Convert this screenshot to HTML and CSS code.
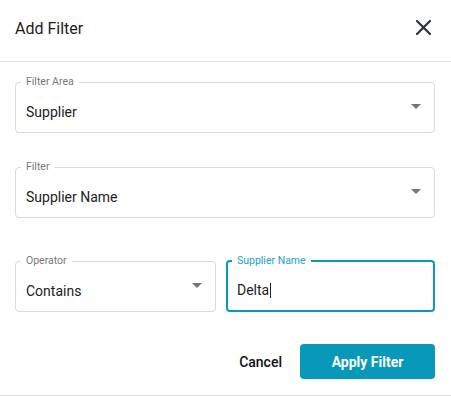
FILE: index.html
```html
<!DOCTYPE html>
<html lang="en">
<head>
<meta charset="utf-8">
<title>Add Filter</title>
<link rel="stylesheet" href="styles.css">
</head>
<body>
<div class="dialog">
  <div class="header">
    <h2 class="title">Add Filter</h2>
    <button class="close" aria-label="Close">
      <svg width="15" height="15" viewBox="0 0 15 15"><path d="M1 1L14 14M14 1L1 14" stroke="#2e3338" stroke-width="2.2" fill="none" stroke-linecap="square"/></svg>
    </button>
  </div>
  <div class="body">
    <fieldset class="field field-1">
      <legend>Filter Area</legend>
      <div class="control"><span class="value">Supplier</span><svg class="arrow" width="10" height="5" viewBox="0 0 10 5"><path d="M0 0L5 5L10 0Z" fill="#757575"/></svg></div>
    </fieldset>
    <fieldset class="field field-2">
      <legend>Filter</legend>
      <div class="control"><span class="value">Supplier Name</span><svg class="arrow" width="10" height="5" viewBox="0 0 10 5"><path d="M0 0L5 5L10 0Z" fill="#757575"/></svg></div>
    </fieldset>
    <div class="row">
      <fieldset class="field operator">
        <legend>Operator</legend>
        <div class="control"><span class="value">Contains</span><svg class="arrow" width="10" height="5" viewBox="0 0 10 5"><path d="M0 0L5 5L10 0Z" fill="#757575"/></svg></div>
      </fieldset>
      <fieldset class="field focused">
        <legend>Supplier Name</legend>
        <div class="control"><span class="value">Delta</span><span class="caret"></span></div>
      </fieldset>
    </div>
    <div class="actions">
      <button class="btn-cancel">Cancel</button>
      <button class="btn-apply">Apply Filter</button>
    </div>
  </div>
</div>
</body>
</html>
```
FILE: styles.css
```css
* { box-sizing: border-box; }
html, body { margin: 0; padding: 0; background: #fff; }
body { font-family: Roboto, "Noto Sans", Arial, sans-serif; color: #222; }

.dialog {
  width: 451px;
  height: 396px;
  border-bottom: 1px solid #e2e2ea;
  display: flex;
  flex-direction: column;
}

.header {
  height: 62px;
  padding: 19px 20px 0 15px;
  display: flex;
  justify-content: space-between;
  align-items: flex-start;
  border-bottom: 1px solid #e3e3e3;
}
.title {
  margin: 0;
  font-size: 16px;
  line-height: 19px;
  font-weight: 400;
  color: #1d1d1d;
}
.close {
  margin: 1px 0 0 0;
  padding: 0;
  border: 0;
  background: none;
  width: 15px;
  height: 15px;
  display: flex;
}

.body {
  padding: 14px 16px 0 15px;
  display: flex;
  flex-direction: column;
}

.field {
  margin: 0;
  min-width: 0;
  border: 1px solid #dadada;
  border-radius: 4px;
  padding: 16px 13px 11px 10px;
}
.field legend {
  font-size: 10.5px;
  line-height: 12px;
  color: #777;
  padding: 0 5px;
  margin-left: -5px;
}
.field-2 { margin-top: 28px; }

.control {
  display: flex;
  align-items: center;
  height: 17px;
}
.value {
  flex: 1;
  font-size: 14px;
  line-height: 17px;
  color: #222;
  white-space: nowrap;
}
.arrow {
  flex: none;
  margin-bottom: 12px;
}

.row {
  margin-top: 37px;
  display: flex;
  gap: 10px;
}
.operator { width: 201px; flex: none; }
.focused {
  flex: 1;
  border: 2px solid #0a99ba;
  padding: 15px 12px 10px 9px;
}
.focused legend { color: #1aa2c1; }
.focused .value { flex: none; }
.caret {
  width: 1px;
  height: 15px;
  background: #222;
  margin-left: 1px;
}

.actions {
  margin-top: 32px;
  display: flex;
  justify-content: flex-end;
  align-items: center;
  gap: 18px;
}
.btn-cancel {
  border: 0;
  background: none;
  padding: 0;
  font-family: inherit;
  font-size: 14px;
  font-weight: 500;
  color: #111;
}
.btn-apply {
  width: 135px;
  height: 35px;
  border: 0;
  border-radius: 4px;
  background: #0899ba;
  color: #fff;
  font-family: inherit;
  font-size: 14px;
  font-weight: 700;
}
```
